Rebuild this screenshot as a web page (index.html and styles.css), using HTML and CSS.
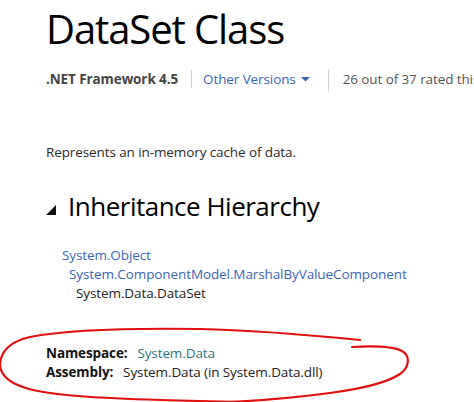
FILE: index.html
```html
<!DOCTYPE html>
<html>
<head>
<meta charset="utf-8">
<link rel="stylesheet" href="styles.css">
</head>
<body>
<div class="page">
  <h1 class="title">DataSet Class</h1>
  <div class="meta">
    <span class="fw">.NET Framework 4.5</span>
    <span class="sep"></span>
    <a class="versions">Other Versions <svg class="caret" width="9" height="5" viewBox="0 0 9 5"><polygon points="0,0 9,0 4.5,4.5" fill="#3a65b8"/></svg></a>
    <span class="sep sep2"></span>
    <span class="rated">26 out of 37 rated this helpful</span>
  </div>
  <p class="summary">Represents an in-memory cache of data.</p>
  <h2 class="section"><svg class="tri" width="10" height="10" viewBox="0 0 10 10"><polygon points="10,0 10,10 0,10" fill="#111"/></svg>Inheritance Hierarchy</h2>
  <div class="tree">
    <a class="l1">System.Object</a>
    <a class="l2">System.ComponentModel.MarshalByValueComponent</a>
    <span class="l3">System.Data.DataSet</span>
  </div>
  <div class="info">
    <div><b>Namespace:</b>&nbsp; <a class="ns">System.Data</a></div>
    <div><b>Assembly:</b>&nbsp; System.Data (in System.Data.dll)</div>
  </div>
</div>
<svg class="ring" width="474" height="402" viewBox="0 0 474 402">
  <path d="M360,340 C300,334 250,330 200,329 C130,328 70,329 30,337 C8,342 1,352 0,364 C0,375 8,384 33,390 C60,396 100,398 160,400 C200,401 230,402 240,402" fill="none" stroke="#e01010" stroke-width="2.2" stroke-linecap="round"/>
  <path d="M352,347 C370,346 392,346 402,351 C411,356 409,368 400,374 C388,382 360,389 330,393 C300,397 270,400 230,402" fill="none" stroke="#e01010" stroke-width="2.2" stroke-linecap="round"/>
</svg>
</body>
</html>
```
FILE: styles.css
```css
html, body {
  margin: 0;
  padding: 0;
  background: #fff;
}
body {
  width: 474px;
  height: 402px;
  overflow: hidden;
  position: relative;
  font-family: "Open Sans", "Noto Sans", sans-serif;
  color: #2a2a2a;
}
.page {
  padding-left: 46px;
}
.title {
  margin: 5px 0 0;
  font-size: 40px;
  line-height: 48px;
  font-weight: 400;
  color: #000;
  letter-spacing: -1.1px;
}
.meta {
  margin-top: 13px;
  display: flex;
  align-items: center;
  white-space: nowrap;
  overflow: hidden;
  font-size: 13.5px;
  line-height: 20px;
  height: 26px;
}
.fw {
  font-weight: 700;
  color: #444;
  letter-spacing: -0.1px;
}
.sep {
  flex: none;
  width: 1px;
  height: 18px;
  background: #d4d4d4;
  margin: 0 11px 0 13px;
}
.sep2 {
  height: 24px;
  margin: 4px 14px 0 18px;
}
.versions {
  color: #3a65b8;
  display: flex;
  align-items: center;
  letter-spacing: -0.1px;
}
.caret {
  margin-left: 5px;
  margin-top: 1px;
}
.rated {
  color: #555;
  letter-spacing: -0.1px;
}
.summary {
  margin: 50px 0 0;
  font-size: 13.5px;
  line-height: 20px;
  letter-spacing: -0.1px;
}
.section {
  margin: 28px 0 0;
  font-size: 26px;
  line-height: 32px;
  font-weight: 500;
  color: #000;
  display: flex;
  align-items: center;
  letter-spacing: -0.5px;
}
.tri {
  margin-right: 12px;
  margin-top: 8px;
}
.tree {
  margin-top: 24px;
  display: flex;
  flex-direction: column;
  font-size: 13.5px;
  line-height: 19px;
  letter-spacing: -0.1px;
}
.tree a { color: #3a65b8; }
.l1 { padding-left: 16px; }
.l2 { padding-left: 23px; }
.l3 { padding-left: 30px; color: #222; }
.info {
  margin-top: 41px;
  font-size: 13.5px;
  line-height: 19px;
  color: #222;
  letter-spacing: -0.1px;
}
.info b {
  font-weight: 700;
  color: #111;
  margin-right: 3px;
}
.ns { color: #2e7580; }
.ring {
  position: absolute;
  left: 0;
  top: 0;
  pointer-events: none;
}
```
